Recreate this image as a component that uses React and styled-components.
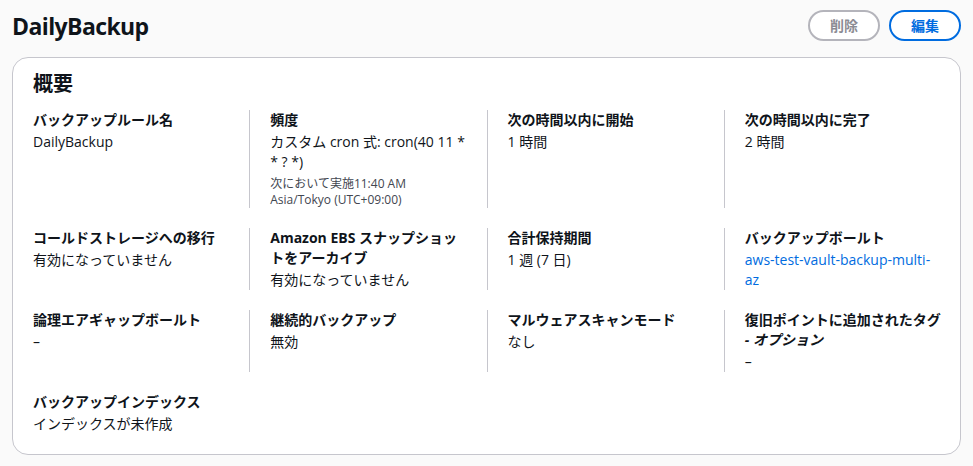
import React from "react";
import styled, { createGlobalStyle } from "styled-components";

const GlobalStyle = createGlobalStyle`
  html, body {
    margin: 0;
    padding: 0;
    background: #fafafa;
  }
  body {
    font-family: "Open Sans", "Noto Sans CJK JP", sans-serif;
    color: #0f141a;
    -webkit-font-smoothing: antialiased;
  }
`;

const Page = styled.div`
  padding: 10px 12px 12px 12px;
`;

const Header = styled.div`
  display: flex;
  align-items: center;
  justify-content: space-between;
  height: 31px;
  margin-bottom: 16px;
`;

const Title = styled.h1`
  margin: 0;
  font-size: 23px;
  line-height: 30px;
  font-weight: 700;
  letter-spacing: -0.6px;
  color: #0f141a;
`;

const Actions = styled.div`
  display: flex;
  gap: 9px;
`;

const Button = styled.button`
  font-family: "Open Sans", "Noto Sans CJK JP", sans-serif;
  font-size: 14px;
  font-weight: 700;
  line-height: 20px;
  height: 31px;
  padding: 0 20px;
  border-radius: 20px;
  background: #ffffff;
  border: 2px solid ${(p) => (p.$disabled ? "#b4b4bb" : "#006ce0")};
  color: ${(p) => (p.$disabled ? "#8c8c94" : "#006ce0")};
  cursor: ${(p) => (p.$disabled ? "default" : "pointer")};
`;

const Card = styled.section`
  background: #ffffff;
  border: 1px solid #c6c6cd;
  border-radius: 16px;
  padding: 14px 0 20px 0;
`;

const CardTitle = styled.h2`
  margin: 0 20px 14px 20px;
  font-size: 20px;
  line-height: 24px;
  font-weight: 700;
  color: #0f141a;
`;

const Grid = styled.div`
  display: grid;
  grid-template-columns: repeat(4, minmax(0, 1fr));
  row-gap: 20px;
  margin: 0 -1px;
`;

const Cell = styled.div`
  padding: 0 20px 0 20px;
  border-left: 1px solid ${(p) => (p.$first ? "transparent" : "#c6c6cd")};
  min-width: 0;
`;

const Label = styled.div`
  font-size: 14px;
  line-height: 20px;
  font-weight: 700;
  color: #0f141a;
`;

const Optional = styled.i`
  font-style: italic;
`;

const Value = styled.div`
  margin-top: 2px;
  font-size: 14px;
  line-height: 20px;
  color: #0f141a;
`;

const SubGroup = styled.div`
  display: flex;
  flex-direction: column;
  margin-top: 4px;
`;

const Sub = styled.div`
  font-size: 12px;
  line-height: 16px;
  height: 16px;
  white-space: nowrap;
  color: #424650;
`;

const Link = styled.a`
  color: #006ce0;
  text-decoration: none;
`;

const rows = [
  [
    { label: "バックアップルール名", value: "DailyBackup" },
    {
      label: "頻度",
      value: "カスタム cron 式: cron(40 11 * * ? *)",
      sub: ["次において実施11:40 AM", "Asia/Tokyo (UTC+09:00)"],
    },
    { label: "次の時間以内に開始", value: "1 時間" },
    { label: "次の時間以内に完了", value: "2 時間" },
  ],
  [
    { label: "コールドストレージへの移行", value: "有効になっていません" },
    { label: "Amazon EBS スナップショットをアーカイブ", value: "有効になっていません" },
    { label: "合計保持期間", value: "1 週 (7 日)" },
    { label: "バックアップボールト", value: "aws-test-vault-backup-multi-az", link: true },
  ],
  [
    { label: "論理エアギャップボールト", value: "–" },
    { label: "継続的バックアップ", value: "無効" },
    { label: "マルウェアスキャンモード", value: "なし" },
    { label: "復旧ポイントに追加されたタグ", optional: "- オプション", value: "–" },
  ],
  [{ label: "バックアップインデックス", value: "インデックスが未作成" }],
];

export default function App() {
  return (
    <>
      <GlobalStyle />
      <Page>
        <Header>
          <Title>DailyBackup</Title>
          <Actions>
            <Button $disabled>削除</Button>
            <Button>編集</Button>
          </Actions>
        </Header>
        <Card>
          <CardTitle>概要</CardTitle>
          <Grid>
            {rows.map((row, ri) =>
              row.map((item, ci) => (
                <Cell
                  key={`${ri}-${ci}`}
                  $first={ci === 0}
                  style={{ gridRow: ri + 1, gridColumn: ci + 1 }}
                >
                  <Label>
                    {item.label}
                    {item.optional && (
                      <>
                        {" "}
                        <Optional>{item.optional}</Optional>
                      </>
                    )}
                  </Label>
                  <Value>
                    {item.link ? <Link href="#">{item.value}</Link> : item.value}
                  </Value>
                  {item.sub && (
                    <SubGroup>
                      {item.sub.map((s) => (
                        <Sub key={s}>{s}</Sub>
                      ))}
                    </SubGroup>
                  )}
                </Cell>
              ))
            )}
          </Grid>
        </Card>
      </Page>
    </>
  );
}
